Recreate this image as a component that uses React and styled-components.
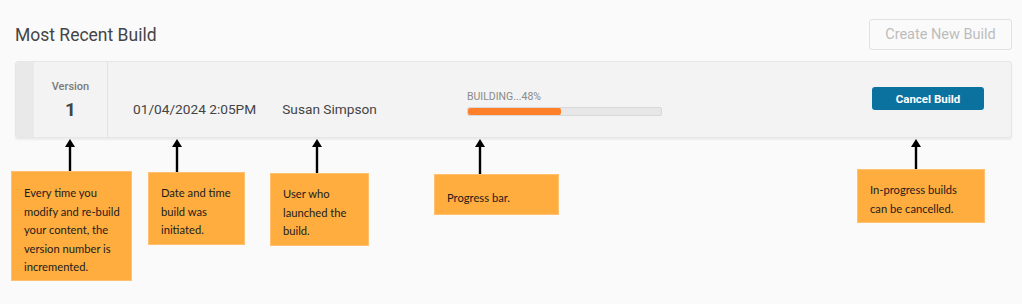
import React from "react";
import styled, { createGlobalStyle } from "styled-components";

const GlobalStyle = createGlobalStyle`
  html, body {
    margin: 0;
    padding: 0;
    background: #fafafa;
  }
  body {
    font-family: Roboto, "Liberation Sans", sans-serif;
  }
`;

const notes = [
  {
    key: "version",
    arrowX: 70,
    left: 11,
    top: 171,
    width: 121,
    height: 110,
    pad: 12,
    text: "Every time you modify and re-build your content, the version number is incremented.",
  },
  { key: "date", arrowX: 177, left: 148, top: 172, width: 97, height: 73, pad: 11, text: "Date and time build was initiated." },
  { key: "user", arrowX: 317, left: 270, top: 173, width: 99, height: 73, pad: 11, text: "User who launched the build." },
  { key: "progress", arrowX: 480, left: 434, top: 174, width: 125, height: 41, pad: 14, text: "Progress bar." },
  { key: "cancel", arrowX: 916, left: 857, top: 169, width: 128, height: 54, pad: 11, text: "In-progress builds can be cancelled." },
];

export default function App() {
  const progress = 48;
  return (
    <Page>
      <GlobalStyle />
      <Header>
        <Title>Most Recent Build</Title>
        <GhostButton disabled>Create New Build</GhostButton>
      </Header>

      <BuildCard>
        <Strip />
        <VersionCol>
          <VersionLabel>Version</VersionLabel>
          <VersionNumber>1</VersionNumber>
        </VersionCol>
        <Cell $ml={25}>01/04/2024 2:05PM</Cell>
        <Cell $ml={26}>Susan Simpson</Cell>
        <ProgressBlock>
          <ProgressLabel>BUILDING...{progress}%</ProgressLabel>
          <Track>
            <Fill style={{ width: `${progress}%` }} />
          </Track>
        </ProgressBlock>
        <CancelButton>Cancel Build</CancelButton>
      </BuildCard>

      <Annotations>
        {notes.map((n) => (
          <React.Fragment key={n.key}>
            <Arrow style={{ left: n.arrowX - 6, top: 138, height: n.top - 138 }}>
              <svg width="12" height={n.top - 138} viewBox={`0 0 12 ${n.top - 138}`}>
                <polygon points="6,1 1,9 11,9" fill="#000" />
                <line x1="6" y1="8" x2="6" y2={n.top - 138} stroke="#000" strokeWidth="2.4" />
              </svg>
            </Arrow>
            <Note $pad={n.pad} style={{ left: n.left, top: n.top, width: n.width, height: n.height }}>
              {n.text}
            </Note>
          </React.Fragment>
        ))}
      </Annotations>
    </Page>
  );
}

const Page = styled.div`
  position: relative;
  width: 1022px;
  height: 304px;
  overflow: hidden;
  background: #fafafa;
`;

const Header = styled.div`
  display: flex;
  justify-content: space-between;
  align-items: center;
  padding: 19px 10px 0 15px;
`;

const Title = styled.h2`
  margin: 0;
  font-size: 17.5px;
  font-weight: 400;
  color: #454545;
`;

const GhostButton = styled.button`
  width: 143px;
  height: 31px;
  border: 1px solid #e1e1e1;
  border-radius: 3px;
  background: #fafafa;
  color: #bdbdbd;
  font-family: Roboto, sans-serif;
  font-size: 14.5px;
  padding: 0;
`;

const BuildCard = styled.div`
  display: flex;
  align-items: center;
  margin: 11px 10px 0 15px;
  height: 75px;
  background: #f3f3f3;
  border: 1px solid #e6e6e6;
  border-radius: 3px;
  box-shadow: 0 2px 2px rgba(0, 0, 0, 0.06);
`;

const Strip = styled.div`
  align-self: stretch;
  width: 18px;
  background: #e9e9e9;
  border-radius: 3px 0 0 3px;
`;

const VersionCol = styled.div`
  align-self: stretch;
  width: 74px;
  border-right: 1px solid #e2e2e2;
  display: flex;
  flex-direction: column;
  align-items: center;
  padding-top: 18px;
  box-sizing: border-box;
`;

const VersionLabel = styled.div`
  font-size: 11px;
  color: #7a7a7a;
  font-weight: 500;
`;

const VersionNumber = styled.div`
  font-size: 19px;
  font-weight: 700;
  color: #444;
  margin-top: 5px;
`;

const Cell = styled.div`
  margin-left: ${(p) => p.$ml}px;
  margin-top: 19px;
  font-size: 13.7px;
  color: #444;
  white-space: nowrap;
`;

const ProgressBlock = styled.div`
  margin-left: 90px;
  margin-top: 6px;
  width: 195px;
`;

const ProgressLabel = styled.div`
  font-size: 10.5px;
  color: #8a8a8a;
  margin-bottom: 4px;
`;

const Track = styled.div`
  height: 7px;
  background: #e7e7e7;
  border: 1px solid #d9d9d9;
  border-radius: 2px;
  overflow: hidden;
`;

const Fill = styled.div`
  height: 100%;
  background: #ff7f2a;
  border-radius: 2px;
`;

const CancelButton = styled.button`
  margin-left: auto;
  margin-right: 27px;
  margin-bottom: 2px;
  width: 112px;
  height: 23px;
  border: none;
  border-radius: 3px;
  background: #0b72a0;
  color: #fff;
  font-family: Roboto, sans-serif;
  font-weight: 700;
  font-size: 11.5px;
  padding: 0;
`;

const Annotations = styled.div`
  position: absolute;
  inset: 0;
  pointer-events: none;
`;

const Arrow = styled.div`
  position: absolute;
  width: 12px;
  svg {
    display: block;
  }
`;

const Note = styled.div`
  position: absolute;
  box-sizing: border-box;
  padding: ${(p) => p.$pad}px 8px 0 12px;
  background: #ffad3f;
  border: 1px solid #ffc170;
  font-family: Lato, "Open Sans", sans-serif;
  font-size: 11.2px;
  line-height: 18.5px;
  color: #1c1c1c;
`;
